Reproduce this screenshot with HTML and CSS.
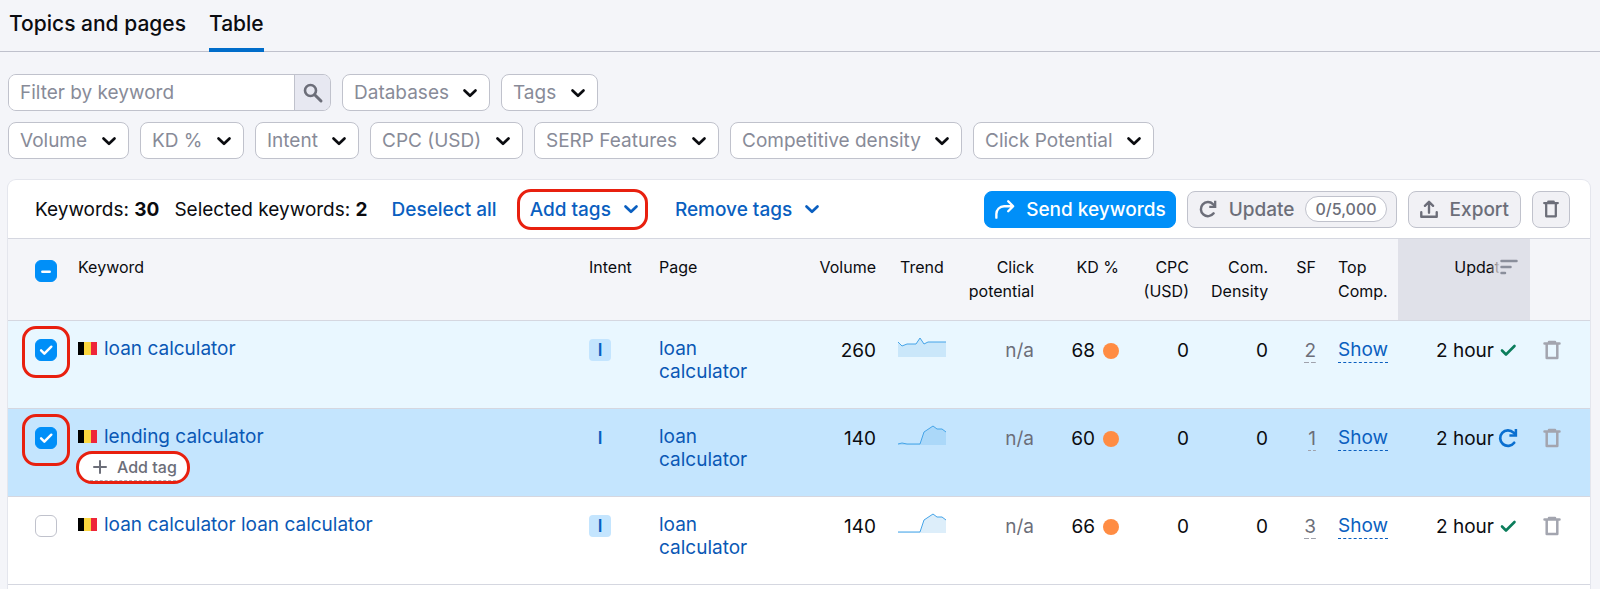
FILE: index.html
```html
<!DOCTYPE html>
<html lang="en">
<head>
    <meta charset="UTF-8">
    <meta name="viewport" content="width=device-width, initial-scale=1.0">
    <title>Keywords table</title>
    <link rel="stylesheet" href="styles.css">
</head>
<body>
    <!-- shared icons -->
    <svg class="sprite" aria-hidden="true">
        <symbol id="chevron" viewBox="0 0 16 16"><path d="M2.500 5.500 8 10.800l5.500-5.300" fill="none" stroke="currentColor" stroke-width="2.700" stroke-linecap="round" stroke-linejoin="round"/></symbol>
        <symbol id="check" viewBox="0 0 22 22"><path d="M5 11.500l4 4 8.500-8.500" fill="none" stroke="currentColor" stroke-linecap="round" stroke-linejoin="round"/></symbol>
        <symbol id="refresh" viewBox="0 0 22 22"><path d="M17.200 15.800A7.800 7.800 0 1 1 16.500 5.600L18.500 7.500" fill="none" stroke="currentColor" stroke-width="2.700" stroke-linecap="round"/><path d="M18.900 2v6.600h-6.500" fill="none" stroke="currentColor" stroke-width="2.500"/></symbol>
        <symbol id="trash" viewBox="0 0 22 22"><path d="M3.500 4.500h15M8 3h6M5.700 4.500v14.500h10.600V4.500" fill="none" stroke="currentColor" stroke-width="2.500" stroke-linejoin="round" stroke-linecap="round"/></symbol>
    </svg>

    <nav class="tabs">
        <a class="tab" href="#topics">Topics and pages</a>
        <a class="tab active" href="#table">Table</a>
    </nav>

    <div class="filters">
        <div class="filter-row">
            <form class="search">
                <input type="text" placeholder="Filter by keyword" aria-label="Filter by keyword">
                <button type="button" aria-label="Search">
                    <svg width="22" height="22" viewBox="0 0 22 22"><circle cx="8.500" cy="8.500" r="5.500" fill="none" stroke="currentColor" stroke-width="2.600"/><path d="M12.700 12.700l6.300 6.300" stroke="currentColor" stroke-width="3" stroke-linecap="round"/></svg>
                </button>
            </form>
            <div class="select"><select aria-label="Databases"><option>Databases</option></select><svg><use href="#chevron"/></svg></div>
            <div class="select"><select aria-label="Tags"><option>Tags</option></select><svg><use href="#chevron"/></svg></div>
        </div>
        <div class="filter-row">
            <div class="select"><select aria-label="Volume"><option>Volume</option></select><svg><use href="#chevron"/></svg></div>
            <div class="select"><select aria-label="KD %"><option>KD %</option></select><svg><use href="#chevron"/></svg></div>
            <div class="select"><select aria-label="Intent"><option>Intent</option></select><svg><use href="#chevron"/></svg></div>
            <div class="select"><select aria-label="CPC (USD)"><option>CPC (USD)</option></select><svg><use href="#chevron"/></svg></div>
            <div class="select"><select aria-label="SERP Features"><option>SERP Features</option></select><svg><use href="#chevron"/></svg></div>
            <div class="select"><select aria-label="Competitive density"><option>Competitive density</option></select><svg><use href="#chevron"/></svg></div>
            <div class="select"><select aria-label="Click Potential"><option>Click Potential</option></select><svg><use href="#chevron"/></svg></div>
        </div>
    </div>

    <div class="card">
        <div class="toolbar">
            <div class="counts">
                <span>Keywords: <b>30</b></span>
                <span>Selected keywords: <b>2</b></span>
            </div>
            <div class="links">
                <button class="link-btn">Deselect all</button>
                <button class="link-btn boxed">Add tags <svg><use href="#chevron"/></svg></button>
                <button class="link-btn">Remove tags <svg><use href="#chevron"/></svg></button>
            </div>
            <div class="actions">
                <button class="btn primary">
                    <svg viewBox="0 0 22 22"><path d="M1.500 20.500v-4a8.500 8.500 0 0 1 8.500-8.500h9.500M14.500 2.500l5.500 5.500-5.500 5.500" fill="none" stroke="currentColor" stroke-width="2.600" stroke-linecap="round" stroke-linejoin="round"/></svg>
                    Send keywords
                </button>
                <button class="btn update">
                    <svg><use href="#refresh"/></svg>
                    Update <span class="pill">0/5,000</span>
                </button>
                <button class="btn">
                    <svg viewBox="0 0 22 22"><path d="M2.500 14.500v5h17v-5M11 15V3.500M6.500 7.500 11 3l4.500 4.500" fill="none" stroke="currentColor" stroke-width="2.600" stroke-linecap="round" stroke-linejoin="round"/></svg>
                    Export
                </button>
                <button class="btn icon-only" aria-label="Delete selected"><svg><use href="#trash"/></svg></button>
            </div>
        </div>

        <table>
            <colgroup>
                <col class="c-check"><col><col class="c-intent"><col class="c-page"><col class="c-volume"><col class="c-trend"><col class="c-click"><col class="c-kd"><col class="c-cpc"><col class="c-com"><col class="c-sf"><col class="c-top"><col class="c-upd"><col class="c-del">
            </colgroup>
            <thead>
                <tr>
                    <th><label class="check some"><input type="checkbox" checked aria-label="Select all"><svg viewBox="0 0 22 22"><path d="M6.500 12h9" stroke="currentColor" stroke-linecap="round"/></svg></label></th>
                    <th>Keyword</th>
                    <th>Intent</th>
                    <th>Page</th>
                    <th class="num">Volume</th>
                    <th class="mid">Trend</th>
                    <th class="num">Click<br>potential</th>
                    <th class="num">KD %</th>
                    <th class="num">CPC<br>(USD)</th>
                    <th class="num">Com.<br>Density</th>
                    <th class="num">SF</th>
                    <th>Top<br>Comp.</th>
                    <th class="num sorted">Updated
                        <span class="sort"><svg viewBox="0 0 18 16"><path d="M1.500 2h15M1.500 8h9M1.500 14h3.500" stroke="currentColor" stroke-width="2.500" stroke-linecap="round"/></svg></span>
                    </th>
                    <th></th>
                </tr>
            </thead>
            <tbody>
                <tr class="selected">
                    <td><label class="check ring"><input type="checkbox" checked aria-label="Select loan calculator"><svg><use href="#check"/></svg></label></td>
                    <td><span class="flag"></span><a href="#">loan calculator</a></td>
                    <td><span class="intent">I</span></td>
                    <td><a href="#">loan calculator</a></td>
                    <td class="num">260</td>
                    <td><svg class="spark" viewBox="0 0 48 22"><path class="area" d="M0 5l4 4 5-2h9l4-6 4 6 4-2h18v15H0z"/><path class="line" d="M0 5l4 4 5-2h9l4-6 4 6 4-2h18"/></svg></td>
                    <td class="num muted">n/a</td>
                    <td class="num">68<span class="dot"></span></td>
                    <td class="num">0</td>
                    <td class="num">0</td>
                    <td class="num muted"><span class="sf">2</span></td>
                    <td><a class="show" href="#">Show</a></td>
                    <td class="num"><span class="upd">2 hour<svg class="ok"><use href="#check"/></svg></span></td>
                    <td><button class="del" aria-label="Delete"><svg><use href="#trash"/></svg></button></td>
                </tr>
                <tr class="selected hover">
                    <td><label class="check ring"><input type="checkbox" checked aria-label="Select lending calculator"><svg><use href="#check"/></svg></label></td>
                    <td><span class="flag"></span><a href="#">lending calculator</a>
                        <button class="add-tag"><svg viewBox="0 0 14 14"><path d="M7 1v12M1 7h12" stroke="currentColor" stroke-width="2" stroke-linecap="round"/></svg>Add tag</button>
                    </td>
                    <td><span class="intent">I</span></td>
                    <td><a href="#">loan calculator</a></td>
                    <td class="num">140</td>
                    <td><svg class="spark" viewBox="0 0 48 22"><path class="area" d="M0 19l4-1 5 1h13l4-12 9-6 4 3h5l4 3v13H0z"/><path class="line" d="M0 19l4-1 5 1h13l4-12 9-6 4 3h5l4 3"/></svg></td>
                    <td class="num muted">n/a</td>
                    <td class="num">60<span class="dot"></span></td>
                    <td class="num">0</td>
                    <td class="num">0</td>
                    <td class="num muted"><span class="sf">1</span></td>
                    <td><a class="show" href="#">Show</a></td>
                    <td class="num"><span class="upd">2 hour<svg class="again"><use href="#refresh"/></svg></span></td>
                    <td><button class="del" aria-label="Delete"><svg><use href="#trash"/></svg></button></td>
                </tr>
                <tr>
                    <td><label class="check"><input type="checkbox" aria-label="Select loan calculator loan calculator"></label></td>
                    <td><span class="flag"></span><a href="#">loan calculator loan calculator</a></td>
                    <td><span class="intent">I</span></td>
                    <td><a href="#">loan calculator</a></td>
                    <td class="num">140</td>
                    <td><svg class="spark" viewBox="0 0 48 22"><path class="area" d="M0 19h22l4-12 9-6 4 3h5l4 3v13H0z"/><path class="line" d="M0 19h22l4-12 9-6 4 3h5l4 3"/></svg></td>
                    <td class="num muted">n/a</td>
                    <td class="num">66<span class="dot"></span></td>
                    <td class="num">0</td>
                    <td class="num">0</td>
                    <td class="num muted"><span class="sf">3</span></td>
                    <td><a class="show" href="#">Show</a></td>
                    <td class="num"><span class="upd">2 hour<svg class="ok"><use href="#check"/></svg></span></td>
                    <td><button class="del" aria-label="Delete"><svg><use href="#trash"/></svg></button></td>
                </tr>
            </tbody>
        </table>
    </div>
</body>
</html>
```
FILE: styles.css
```css
*{
    box-sizing: border-box;
}
body{
    margin: 0;
    background-color: #f4f5f9;
    color: #0b0c10;
    font-family: Inter, "Liberation Sans", sans-serif;
    font-size: 19px;
}
button, input, select{
    font-family: inherit;
    font-size: 19px;
}
a{
    color: #0a58b5;
    text-decoration: none;
}
.sprite{
    display: none;
}

/* tabs */
.tabs{
    display: flex;
    gap: 23px;
    padding: 0 9px;
    border-bottom: 1px solid #bfc1cc;
}
.tab{
    height: 52px;
    margin-bottom: -1px;
    padding-top: 11px;
    line-height: 26px;
    font-size: 21px;
    font-weight: 500;
    color: #0b0c10;
}
.tab.active{
    border-bottom: 4px solid #006dca;
}

/* filters */
.filters{
    display: flex;
    flex-direction: column;
    gap: 11px;
    padding: 22px 8px 21px;
}
.filter-row{
    display: flex;
    flex-wrap: wrap;
    gap: 11px;
}
.search{
    display: flex;
    width: 323px;
    height: 37px;
    border: 1px solid #c0c2cc;
    border-radius: 8px;
    overflow: hidden;
}
.search input{
    flex: 1;
    min-width: 0;
    padding: 0 11px;
    border: none;
    background-color: white;
}
.search input::placeholder{
    color: #888b98;
}
.search button{
    display: flex;
    align-items: center;
    justify-content: center;
    width: 36px;
    padding: 0;
    border: none;
    border-left: 1px solid #c0c2cc;
    background-color: #e7e8f1;
    color: #6c6e79;
}
.select{
    display: grid;
    align-items: center;
}
.select select{
    grid-area: 1 / 1;
    appearance: none;
    height: 37px;
    padding: 0 40px 0 11px;
    border: 1px solid #c0c2cc;
    border-radius: 8px;
    background-color: white;
    color: #888b98;
}
.select svg{
    grid-area: 1 / 1;
    justify-self: end;
    width: 16px;
    height: 16px;
    margin-right: 12px;
    color: #0b0c10;
    pointer-events: none;
}

/* card */
.card{
    margin: 0 10px 0 8px;
    padding-bottom: 4px;
    border-radius: 8px 8px 0 0;
    background-color: white;
    box-shadow: 0 0 0 1px #e4e6ed;
}
.toolbar{
    display: flex;
    align-items: center;
    height: 59px;
    padding: 0 20px 0 27px;
    border-bottom: 1px solid #d5d7e0;
}
.counts{
    display: flex;
    gap: 15px;
}
.links{
    display: flex;
    align-items: center;
    gap: 13px;
    margin-left: 17px;
}
.link-btn{
    display: flex;
    align-items: center;
    gap: 12px;
    height: 41px;
    padding: 0 7px;
    border: none;
    background: none;
    font-weight: 500;
    color: #0a5fc0;
}
.link-btn svg{
    width: 16px;
    height: 16px;
}
.boxed{
    margin-right: 7px;
    padding: 0 6px 0 10px;
    border: 3px solid #e8200f;
    border-radius: 14px;
}
.actions{
    display: flex;
    gap: 11px;
    margin-left: auto;
}
.btn{
    display: flex;
    align-items: center;
    gap: 11px;
    height: 37px;
    padding: 0 11px 0 10px;
    border: 1px solid #c0c2cc;
    border-radius: 8px;
    background-color: #f1f1f5;
    font-weight: 500;
    color: #6c6e79;
}
.btn svg{
    width: 20px;
    height: 20px;
}
.primary{
    padding-right: 9px;
    border-color: #008ff8;
    background-color: #008ff8;
    color: white;
}
.update{
    padding-right: 9px;
}
.icon-only{
    padding: 0 8px;
}
.pill{
    padding: 0 9px;
    border: 1px solid #c0c2cc;
    border-radius: 13px;
    background-color: white;
    line-height: 24px;
    font-size: 16px;
}

/* table */
table{
    width: 100%;
    table-layout: fixed;
    border-collapse: collapse;
}
.c-check{ width: 59px; }
.c-intent{ width: 70px; }
.c-page{ width: 129px; }
.c-volume{ width: 110px; }
.c-trend{ width: 70px; }
.c-click{ width: 88px; }
.c-kd{ width: 85px; }
.c-cpc{ width: 70px; }
.c-com{ width: 79px; }
.c-sf{ width: 48px; }
.c-top{ width: 71px; }
.c-upd{ width: 132px; }
.c-del{ width: 60px; }
th, td{
    padding: 16px 11px 0;
    border-bottom: 1px solid #d5d7e0;
    vertical-align: top;
    text-align: left;
}
th{
    height: 81px;
    background-color: #f4f5f9;
    font-size: 16px;
    font-weight: 400;
    line-height: 24px;
    white-space: nowrap;
}
td{
    height: 88px;
    line-height: 23px;
}
th:first-child, td:first-child{
    padding-left: 27px;
}
.num{
    text-align: right;
}
td.num{
    line-height: 27px;
}
.mid{
    text-align: center;
}
.muted{
    color: #6c6e79;
}
.selected{
    background-color: #e9f7ff;
}
.hover{
    background-color: #c4e5fe;
}
.sorted{
    position: relative;
    background-color: #e0e1e9;
}
.sort{
    position: absolute;
    top: 16px;
    right: 10px;
    display: flex;
    align-items: center;
    height: 24px;
    padding: 0 2px 0 10px;
    background: linear-gradient(to right, transparent, #e0e1e9 10px);
    color: #8a8e9b;
}
.sort svg{
    width: 18px;
    height: 16px;
}

/* checkboxes */
.check{
    position: relative;
    display: grid;
    width: 22px;
    margin-top: 2px;
}
.some{
    margin-top: 5px;
}
.check input{
    grid-area: 1 / 1;
    appearance: none;
    width: 22px;
    height: 22px;
    margin: 0;
    border: 1px solid #c0c2cc;
    border-radius: 6px;
    background-color: white;
}
.check input:checked{
    border-color: #008ff8;
    background-color: #008ff8;
}
.check svg{
    grid-area: 1 / 1;
    z-index: 1;
    width: 22px;
    height: 22px;
    padding: 2px;
    color: white;
    stroke-width: 3px;
    pointer-events: none;
}
.ring::after{
    content: "";
    position: absolute;
    inset: -13px -13px -17px;
    border: 3px solid #e8200f;
    border-radius: 14px;
    pointer-events: none;
}

/* cells */
.flag{
    display: inline-block;
    width: 19px;
    height: 13px;
    margin-right: 7px;
    background: linear-gradient(to right, black 33%, #fbd63f 33% 67%, #ee2539 67%);
}
.add-tag{
    position: relative;
    display: flex;
    align-items: center;
    gap: 10px;
    height: 33px;
    margin: 3px 0 0 -2px;
    padding: 0 10px 0 14px;
    border: 3px solid #e8200f;
    border-radius: 16px;
    background-color: white;
    font-size: 16px;
    font-weight: 500;
    color: #6c6e79;
}
.add-tag::after{
    content: "";
    position: absolute;
    left: 11px;
    right: 11px;
    bottom: 0;
    border-bottom: 1px dashed #a9abb6;
}
.add-tag svg{
    width: 14px;
    height: 14px;
}
.intent{
    display: block;
    width: 22px;
    margin-top: 2px;
    border-radius: 4px;
    background-color: #c4e5fe;
    line-height: 22px;
    text-align: center;
    font-size: 17px;
    font-weight: 600;
    color: #0a5fc0;
}
.spark{
    display: block;
    width: 48px;
    height: 22px;
}
.area{
    fill: #2b94e1;
    fill-opacity: 0.16;
}
.line{
    fill: none;
    stroke: #45a4e8;
}
.dot{
    display: inline-block;
    width: 16px;
    height: 16px;
    margin-left: 8px;
    border-radius: 50%;
    background-color: #ff8c43;
    vertical-align: -2px;
}
.sf{
    display: inline-block;
    line-height: 25px;
    background: linear-gradient(to right, #a0a2ac 40%, transparent 40% 60%, #a0a2ac 60%) bottom / 100% 1px no-repeat;
}
.show{
    display: inline-block;
    line-height: 25px;
    border-bottom: 1px dashed #0a5fc0;
    color: #0a5fc0;
}
.upd{
    display: flex;
    align-items: center;
    justify-content: flex-end;
    gap: 3px;
    white-space: nowrap;
}
.upd svg, .del svg{
    display: block;
    width: 22px;
    height: 22px;
}
.ok{
    color: #0b7d5b;
    stroke-width: 2.6px;
}
.again{
    color: #0a6fd0;
}
.del{
    margin: 2px 0 0;
    padding: 0;
    border: none;
    background: none;
    color: #a3a5af;
}
```
